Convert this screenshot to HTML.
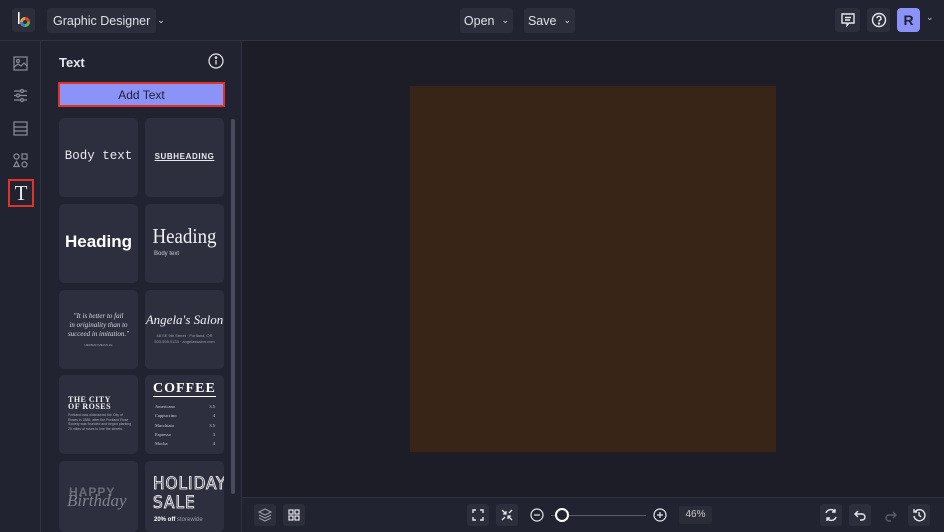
<!DOCTYPE html>
<html><head><meta charset="utf-8"><style>
*{margin:0;padding:0;box-sizing:border-box;white-space:nowrap}
html,body{width:944px;height:532px;overflow:hidden}
body{background:#1c1d27;font-family:"Liberation Sans",sans-serif;color:#e6e7ee;position:relative}
.top{position:absolute;left:0;top:0;width:944px;height:41px;background:#222330;border-bottom:1px solid #30323f}
.btn{position:absolute;background:#2c2e3b;border-radius:3px;font-size:12.5px;color:#dfe0e8;display:flex;align-items:center;justify-content:center}
.rail{position:absolute;left:0;top:41px;width:41px;height:491px;background:#222330;border-right:1px solid #30323f}
.panel{position:absolute;left:41px;top:41px;width:201px;height:491px;background:#222330;border-right:1px solid #30323f}
.tile{position:absolute;width:79px;height:79px;background:#2d2f3e;border-radius:5px;overflow:hidden}
.ic{position:absolute}
.bottom{position:absolute;left:242px;top:497px;width:702px;height:35px;background:#222330;border-top:1px solid #30323f}
.sb{position:absolute;width:22px;height:22px;background:#2c2e3b;border-radius:3px}
</style></head><body>
<div class="top">
  <div class="btn" style="left:12px;top:8px;width:23px;height:24px">
    <svg width="16" height="18" viewBox="0 0 16 18"><rect x="2" y="1" width="1.6" height="12" fill="#fff"/><circle cx="9" cy="11" r="5" fill="#e5a23a"/><path d="M9 6a5 5 0 0 1 5 5H9z" fill="#d7463b"/><path d="M4 11a5 5 0 0 0 5 5V11z" fill="#3c7bd8"/><path d="M9 16a5 5 0 0 0 5-5H9z" fill="#59b457"/><circle cx="9" cy="11" r="2" fill="#2c2e3b"/></svg>
  </div>
  <div class="btn" style="left:47px;top:8px;width:109px;height:25px;justify-content:flex-start;padding-left:6px">Graphic Designer <span style="margin-left:7px;font-size:9px">&#8964;</span></div>
  <div class="btn" style="left:460px;top:8px;width:53px;height:25px">Open <span style="margin-left:7px;font-size:9px">&#8964;</span></div>
  <div class="btn" style="left:524px;top:8px;width:51px;height:25px">Save <span style="margin-left:7px;font-size:9px">&#8964;</span></div>
  <div class="btn" style="left:835px;top:8px;width:25px;height:24px"><svg width="16" height="16" viewBox="0 0 16 16" fill="none" stroke="#e6e7ee" stroke-width="1.4"><path d="M2 2h12v9H9l-2 2.5V11H2z"/><path d="M5 5.5h6M5 8h5"/></svg></div>
  <div class="btn" style="left:867px;top:8px;width:23px;height:24px"><svg width="16" height="16" viewBox="0 0 16 16" fill="none" stroke="#e6e7ee" stroke-width="1.4"><circle cx="8" cy="8" r="6.5"/><path d="M6 6.3a2 2 0 1 1 2.7 1.9c-.6.3-.7.7-.7 1.3"/><circle cx="8" cy="11.6" r=".5" fill="#e6e7ee"/></svg></div>
  <div class="btn" style="left:897px;top:8px;width:23px;height:24px;background:#8b93f8;color:#1f2030;font-weight:bold;font-size:14px;border-radius:4px">R</div>
  <div style="position:absolute;left:926px;top:12px;font-size:9px;color:#ccc">&#8964;</div>
</div>

<div class="rail">
  <svg class="ic" style="left:13px;top:15px" width="15" height="15" viewBox="0 0 15 15" fill="none" stroke="#8b8d9c" stroke-width="1.2"><rect x="1" y="1" width="13" height="13"/><circle cx="5" cy="5" r="1.5"/><path d="M1 11l4-3 3 2 3-3 3 3"/></svg>
  <svg class="ic" style="left:13px;top:47px" width="15" height="15" viewBox="0 0 15 15" fill="none" stroke="#8b8d9c" stroke-width="1.2"><path d="M1 3h13M1 7.5h13M1 12h13"/><circle cx="9" cy="3" r="1.5" fill="#222330"/><circle cx="5" cy="7.5" r="1.5" fill="#222330"/><circle cx="9" cy="12" r="1.5" fill="#222330"/></svg>
  <svg class="ic" style="left:13px;top:80px" width="15" height="15" viewBox="0 0 15 15" fill="none" stroke="#8b8d9c" stroke-width="1.2"><rect x="1" y="1" width="13" height="13"/><path d="M1 6h13M1 10h13"/></svg>
  <svg class="ic" style="left:13px;top:112px" width="15" height="15" viewBox="0 0 15 15" fill="none" stroke="#8b8d9c" stroke-width="1.2"><circle cx="3.5" cy="3.5" r="2.5"/><rect x="9" y="1" width="5" height="5"/><path d="M3.5 8.5l2.7 5H.8z"/><circle cx="11.5" cy="11.5" r="2.5"/></svg>
  <div style="position:absolute;left:8px;top:138px;width:26px;height:28px;border:2px solid #e0342a"></div>
  <div style="position:absolute;left:8px;top:138px;width:26px;height:28px;text-align:center;font-family:'Liberation Serif',serif;font-size:21px;line-height:28px;color:#e6e7ee">T</div>
</div>

<div class="panel">
  <div style="position:absolute;left:18px;top:14px;font-size:13px;font-weight:bold">Text</div>
  <svg class="ic" style="left:167px;top:12px" width="16" height="16" viewBox="0 0 16 16" fill="none" stroke="#e6e7ee" stroke-width="1.2"><circle cx="8" cy="8" r="7"/><path d="M8 7v4.5"/><circle cx="8" cy="4.6" r=".7" fill="#e6e7ee"/></svg>
  <div style="position:absolute;left:17px;top:41px;width:167px;height:25px;background:#8b93f8;border:2px solid #e0342a;color:#1f2030;font-size:12px;text-align:center;line-height:22px">Add Text</div>
  <div style="position:absolute;left:190px;top:78px;width:4px;height:375px;background:#4a4c5c;border-radius:2px"></div>
</div>

<div class="tile" style="left:59px;top:118px"><div style="position:absolute;top:31px;width:100%;text-align:center;font-family:'Liberation Mono',monospace;font-size:12.5px;color:#e8e8ee">Body text</div></div>
<div class="tile" style="left:145px;top:118px"><div style="position:absolute;top:34px;width:100%;text-align:center;font-size:8px;font-weight:bold;letter-spacing:.6px;text-decoration:underline;color:#e8e8ee">SUBHEADING</div></div>
<div class="tile" style="left:59px;top:204px"><div style="position:absolute;top:28px;width:100%;text-align:center;font-size:17px;font-weight:bold;color:#fff">Heading</div></div>
<div class="tile" style="left:145px;top:204px"><div style="position:absolute;top:20px;width:100%;text-align:center;font-family:'Liberation Serif',serif;font-size:21px;color:#f0f0f4;transform:scaleX(.9)">Heading</div><div style="position:absolute;left:9px;top:47px;font-size:6px;color:#c8c9d2">Body text</div></div>
<div class="tile" style="left:59px;top:290px"><div style="position:absolute;top:22px;width:100%;text-align:center;font-family:'Liberation Serif',serif;font-style:italic;font-size:7px;line-height:9px;color:#d8d9e0">"It is better to fail<br>in originality than to<br>succeed in imitation."</div><div style="position:absolute;top:53px;width:100%;text-align:center;font-size:3px;color:#aaa">HERMAN MELVILLE</div></div>
<div class="tile" style="left:145px;top:290px"><div style="position:absolute;top:22px;width:100%;text-align:center;font-family:'Liberation Serif',serif;font-style:italic;font-size:13px;color:#f0f0f4">Angela's Salon</div><div style="position:absolute;top:43px;width:100%;text-align:center;font-size:4px;line-height:6px;color:#9a9cab">48 SE 9th Street · Portland, OR<br>503.555.0134 · angelassalon.com</div></div>
<div class="tile" style="left:59px;top:375px"><div style="position:absolute;left:9px;top:21px;font-family:'Liberation Serif',serif;font-weight:bold;font-size:8px;line-height:7px;color:#f0f0f4;letter-spacing:.5px">THE CITY<br>OF ROSES</div><div style="position:absolute;left:9px;top:38px;width:64px;white-space:normal;font-size:3.5px;line-height:4.7px;color:#aaacba">Portland was nicknamed the City of Roses in 1889, after the Portland Rose Society was founded and began planting 20 miles of roses to line the streets.</div></div>
<div class="tile" style="left:145px;top:375px"><div style="position:absolute;left:8px;top:7px;font-family:'Liberation Serif',serif;font-weight:900;font-size:14px;letter-spacing:1px;color:#fff;border-bottom:1px solid #fff;line-height:14px">COFFEE</div>
<div style="position:absolute;left:10px;top:27px;width:60px;font-family:'Liberation Serif',serif;font-size:4.5px;line-height:9.3px;color:#d0d1da">
<div style="display:flex;justify-content:space-between"><span>Americano</span><span>3.5</span></div><div style="display:flex;justify-content:space-between"><span>Cappuccino</span><span>4</span></div><div style="display:flex;justify-content:space-between"><span>Macchiato</span><span>3.5</span></div><div style="display:flex;justify-content:space-between"><span>Espresso</span><span>3</span></div><div style="display:flex;justify-content:space-between"><span>Mocha</span><span>4</span></div></div></div>
<div class="tile" style="left:59px;top:461px;height:71px"><div style="position:absolute;left:10px;top:24px;font-weight:bold;font-size:12px;letter-spacing:1px;color:#6a6c78">HAPPY</div><div style="position:absolute;left:8px;top:30px;font-family:'Liberation Serif',serif;font-style:italic;font-size:17px;color:#80828e">Birthday</div></div>
<div class="tile" style="left:145px;top:461px;height:71px"><div style="position:absolute;left:8px;top:14px;font-family:'DejaVu Sans Condensed','Liberation Sans Narrow',sans-serif;font-size:17px;line-height:19px;color:transparent;-webkit-text-stroke:.8px #fff;letter-spacing:1px">HOLIDAY<br>SALE</div><div style="position:absolute;left:9px;top:56px;font-size:6px;color:#fff;font-weight:bold">20% off <span style="font-weight:normal;color:#9a9cab">storewide</span></div></div>

<div style="position:absolute;left:410px;top:86px;width:366px;height:366px;background:#382518"></div>

<div class="bottom">
  <div class="sb" style="left:12px;top:6px"><svg width="22" height="22" viewBox="0 0 22 22" fill="none" stroke="#9a9cab" stroke-width="1.1"><path d="M11 5l6 3-6 3-6-3z"/><path d="M5 11l6 3 6-3M5 14l6 3 6-3"/></svg></div>
  <div class="sb" style="left:41px;top:6px"><svg width="22" height="22" viewBox="0 0 22 22" fill="none" stroke="#e6e7ee" stroke-width="1.2"><rect x="6" y="6" width="4" height="4"/><rect x="12" y="6" width="4" height="4"/><rect x="6" y="12" width="4" height="4"/><rect x="12" y="12" width="4" height="4"/></svg></div>
  <div class="sb" style="left:225px;top:6px"><svg width="22" height="22" viewBox="0 0 22 22" fill="none" stroke="#e6e7ee" stroke-width="1.4"><path d="M6 9V6h3M13 6h3v3M16 13v3h-3M9 16H6v-3"/></svg></div>
  <div class="sb" style="left:254px;top:6px"><svg width="22" height="22" viewBox="0 0 22 22" fill="none" stroke="#e6e7ee" stroke-width="1.3"><path d="M6 6l4 4M10 7v3H7M16 6l-3 3M6 16l3-3M16 16l-4-4M12 15v-3h3"/></svg></div>
  <svg class="ic" style="left:288px;top:10px" width="14" height="14" viewBox="0 0 14 14" fill="none" stroke="#e6e7ee" stroke-width="1.2"><circle cx="7" cy="7" r="6"/><path d="M4 7h6"/></svg>
  <div style="position:absolute;left:309px;top:17px;width:95px;height:1px;background:#5a5c6c"></div>
  <div style="position:absolute;left:313px;top:10px;width:14px;height:14px;border-radius:50%;border:2px solid #fff;background:#222330"></div>
  <svg class="ic" style="left:411px;top:10px" width="14" height="14" viewBox="0 0 14 14" fill="none" stroke="#e6e7ee" stroke-width="1.2"><circle cx="7" cy="7" r="6"/><path d="M4 7h6M7 4v6"/></svg>
  <div style="position:absolute;left:437px;top:8px;width:33px;height:18px;background:#2a2c38;border-radius:2px;font-size:10px;text-align:center;line-height:18px;color:#ccc">46%</div>
  <div class="sb" style="left:578px;top:6px"><svg width="22" height="22" viewBox="0 0 22 22" fill="none" stroke="#e6e7ee" stroke-width="1.4"><path d="M15 8a5 5 0 0 0-9 1M7 14a5 5 0 0 0 9-1M15 5v3h-3M7 17v-3h3"/></svg></div>
  <div class="sb" style="left:607px;top:6px"><svg width="22" height="22" viewBox="0 0 22 22" fill="none" stroke="#e6e7ee" stroke-width="1.4"><path d="M9 7L6 10l3 3M6 10h7a3 3 0 0 1 0 6h-2"/></svg></div>
  <svg class="ic" style="left:638px;top:7px" width="22" height="22" viewBox="0 0 22 22" fill="none" stroke="#5a5c6c" stroke-width="1.4"><path d="M13 7l3 3-3 3M16 10H9a3 3 0 0 0 0 6h2"/></svg>
  <div class="sb" style="left:666px;top:6px"><svg width="22" height="22" viewBox="0 0 22 22" fill="none" stroke="#e6e7ee" stroke-width="1.4"><path d="M7 8a5.5 5.5 0 1 1-1 4M6 5v3h3M11 8v3l2 2"/></svg></div>
</div>
</body></html>
